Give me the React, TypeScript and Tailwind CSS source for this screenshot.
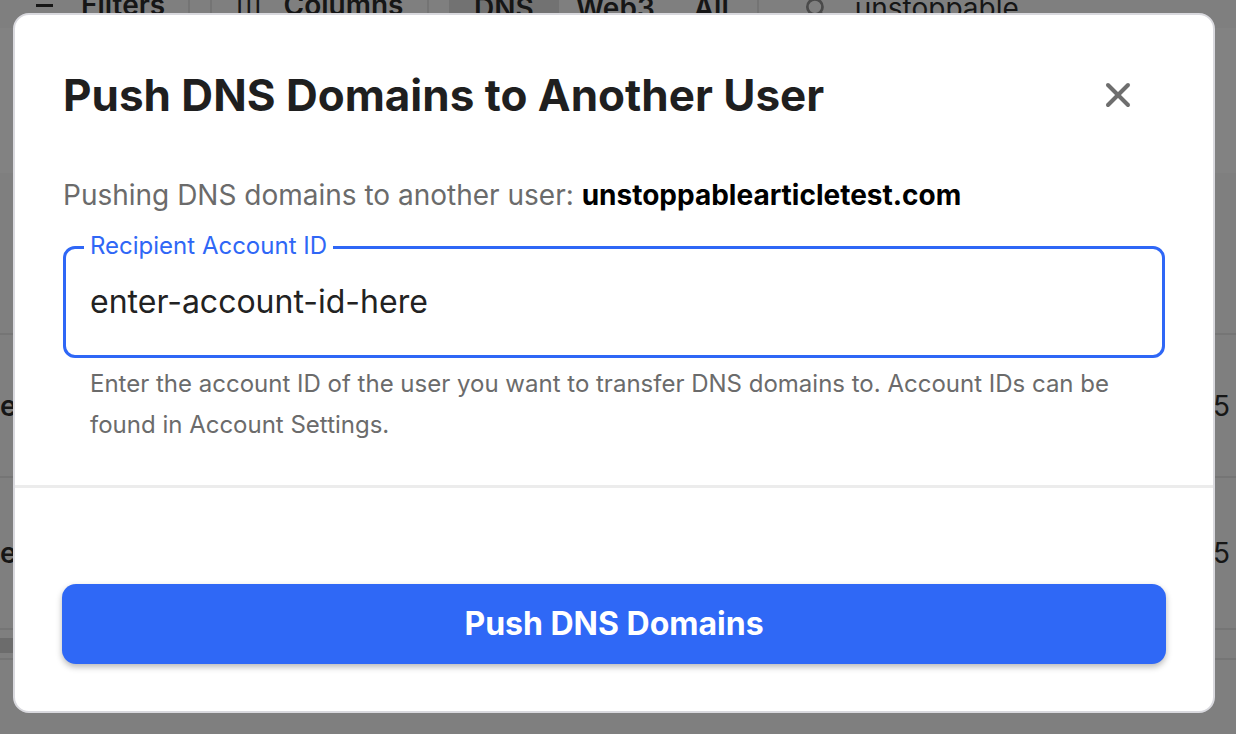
import { X } from "lucide-react";

// Dimmed page behind the dialog — only a thin strip of it shows round the edges.
function BackgroundPage() {
  return (
    <div className="h-[734px] w-full overflow-hidden bg-[#7f7f7f] text-[#161616]">
      <div className="mt-[-12px] flex h-[40px] items-start text-[28px] font-semibold leading-[34px]">
        <div className="flex w-[190px] items-center border-r-2 border-[#747474] pl-[36px]">
          <span className="mr-[28px] h-[3px] w-[17px] bg-[#161616]" />
          <span>Filters</span>
        </div>
        <div className="ml-[20px] flex w-[219px] items-center border-x-2 border-[#747474] pl-[24px]">
          <span className="mr-[20px] text-[20px] tracking-[2px]">|||</span>
          <span>Columns</span>
        </div>
        <div className="ml-[20px] flex items-center">
          <span className="bg-[#727272] px-[25px]">DNS</span>
          <span className="ml-[17px]">Web3</span>
          <span className="ml-[39px]">All</span>
          <span className="ml-[28px] h-[40px] w-[2px] bg-[#747474]" />
          <svg className="ml-[44px]" width="26" height="26" viewBox="0 0 24 24" fill="none" stroke="#4a4a4a" strokeWidth="2.5">
            <circle cx="11" cy="11" r="7" />
            <path d="M16.5 16.5 21 21" />
          </svg>
          <span className="ml-[26px] font-normal">unstoppable</span>
        </div>
      </div>
      <div className="h-[145px] bg-[#828282]" />
      <div className="h-[162px] border-b-2 border-[#757575]" />
      <div className="flex h-[143px] items-center justify-between border-b-2 border-[#757575] pl-0 pr-[6px] text-[28px]">
        <span className="font-semibold">e</span>
        <span>5</span>
      </div>
      <div className="flex h-[152px] items-center justify-between border-b-2 border-[#757575] pr-[6px] text-[28px]">
        <span className="font-semibold">e</span>
        <span>5</span>
      </div>
      <div className="mt-[8px] h-[15px] w-[40px] bg-[#6c6c6c]" />
      <div className="mt-[5px] border-t-2 border-[#757575]" />
    </div>
  );
}

export default function App() {
  return (
    <div className="relative h-[734px] w-[1236px] overflow-hidden" style={{ fontFamily: "Inter, 'Noto Sans', sans-serif" }}>
      <BackgroundPage />

      {/* Push dialog */}
      <div className="absolute left-[13px] top-[13px] flex h-[700px] w-[1202px] flex-col rounded-[16px] border-2 border-[#d9d9de] bg-white">
        <div className="flex items-center justify-between pl-[48px] pr-[71px] pt-[54px]">
          <h2 className="text-[44px] font-bold leading-[52px] text-[#1f1f1f]">
            Push DNS Domains to Another User
          </h2>
          <button className="flex h-[48px] w-[48px] items-center justify-center text-[#6e6e6e]">
            <X size={40} strokeWidth={2.4} />
          </button>
        </div>

        <div className="px-[48px]">
          <p className="mt-[57px] text-[28px] leading-[34px] text-[#6b6b6b]">
            Pushing DNS domains to another user:{" "}
            <span className="font-bold text-black">unstoppablearticletest.com</span>
          </p>

          <div className="relative mt-[34px] flex h-[112px] items-center rounded-[12px] border-[3px] border-[#2f67f6] px-[24px]">
            <span className="absolute left-[18px] top-[-17px] bg-white px-[6px] text-[24px] leading-[28px] text-[#2f67f6]">
              Recipient Account ID
            </span>
            <span className="text-[32px] leading-[38px] text-[#222222]">enter-account-id-here</span>
          </div>

          <p className="mt-[5px] px-[27px] text-[24px] leading-[41px] text-[#6b6b6b]">
            Enter the account ID of the user you want to transfer DNS domains to. Account IDs can be found in
            Account Settings.
          </p>
        </div>

        <div className="mt-[40px] h-[3px] bg-[#ececec]" />

        <div className="px-[47px] pt-[96px]">
          <button className="flex h-[80px] w-full items-center justify-center rounded-[14px] bg-[#2f68f6] text-[32px] font-bold text-white shadow-[0_3px_6px_rgba(0,0,0,0.28)]">
            Push DNS Domains
          </button>
        </div>
      </div>
    </div>
  );
}
